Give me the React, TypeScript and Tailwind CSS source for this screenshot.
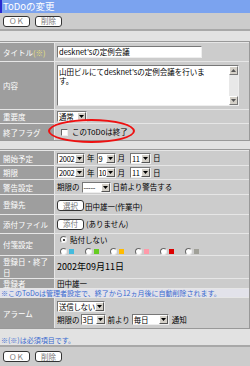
import React from "react";

const Sel = ({ w, v }: { w: number; v: string }) => (
  <div
    className="flex h-[11px] shrink-0 items-stretch border border-t-[#777] border-l-[#777] border-b-[#eee] border-r-[#eee] bg-white"
    style={{ width: w }}
  >
    <div className="flex-1 overflow-hidden whitespace-nowrap pl-[1px] text-[7.5px] leading-[9px] tracking-[-0.3px] text-black">{v}</div>
    <div className="flex w-[9px] items-center justify-center border border-t-[#fff] border-l-[#fff] border-b-[#555] border-r-[#555] bg-[#d4d0c8]">
      <svg width="5" height="3" viewBox="0 0 5 3">
        <path d="M0 0H5L2.5 3Z" fill="#000" />
      </svg>
    </div>
  </div>
);

const Btn = ({ t }: { t: string }) => (
  <div className="flex h-[11px] shrink-0 items-center justify-center rounded-[3px] border border-[#333] bg-white px-[5px] text-[7.5px] leading-none text-[#777]">
    {t}
  </div>
);

const Row = ({ label, h, children, labelExtra }: { label: React.ReactNode; h: number; children?: React.ReactNode; labelExtra?: React.ReactNode }) => (
  <div className="flex border-t border-[#e6e6e6]" style={{ height: h }}>
    <div className="flex w-[55px] shrink-0 items-center border-r border-[#e6e6e6] bg-[#9e9e9e] pl-[3px] text-[7.5px] leading-[9px] text-white">
      {label}
      {labelExtra}
    </div>
    <div className="flex min-w-0 flex-1 items-center bg-[#cccccc] pl-[2px] text-[7.5px] leading-[10px] text-black">{children}</div>
  </div>
);

const Radio = ({ on = false }: { on?: boolean }) => (
  <div className="relative h-[7px] w-[7px] shrink-0 rounded-full border border-t-[#666] border-l-[#666] border-b-[#eee] border-r-[#eee] bg-white">
    {on && <div className="absolute left-[1.5px] top-[1.5px] h-[2px] w-[2px] rounded-full bg-black" />}
  </div>
);

export default function App() {
  return (
    <div className="relative h-[366px] w-[250px] overflow-hidden bg-[#e2e2e2] font-['Noto_Sans_CJK_JP',sans-serif]">
      {/* title bar */}
      <div className="flex h-[13px] bg-[#7ba3ef]">
        <div className="w-[2px] bg-[#2a2ad0]" />
        <div className="pl-[1px] text-[9.5px] leading-[13px] text-white">ToDoの変更</div>
      </div>
      {/* button bar */}
      <div className="flex h-[18px] items-center gap-[5px] border-b-2 border-[#a8a8a8] bg-[#cccccc] pl-[3px]">
        <Btn t="ＯＫ" />
        <Btn t="削除" />
      </div>
      <div className="h-[10px]" />
      <div className="border-r border-b border-[#999] border-t border-t-[#999]">
        <Row h={19} label="タイトル" labelExtra={<span className="text-[#e8e07a]">(※)</span>}>
          <div className="flex h-[12px] w-[145px] items-center border border-t-[#777] border-l-[#777] border-b-[#eee] border-r-[#eee] bg-white pl-[1px] text-[7.5px]">
            desknet'sの定例会議
          </div>
        </Row>
        <Row h={48} label="内容">
          <div className="flex h-[41px] w-[182px] border border-t-[#777] border-l-[#777] border-b-[#eee] border-r-[#eee] bg-white">
            <div className="flex-1">
              <div className="w-[152px] pl-[1px] pt-[1px] text-[7.5px] leading-[9px]">山田ビルにてdesknet'sの定例会議を行います。</div>
            </div>
            <div className="flex w-[9px] flex-col justify-between bg-[#e8e8e8]">
              <div className="flex h-[9px] items-center justify-center border border-t-[#fff] border-l-[#fff] border-b-[#777] border-r-[#777] bg-[#d4d0c8]">
                <svg width="5" height="3" viewBox="0 0 5 3"><path d="M0 3H5L2.5 0Z" fill="#555" /></svg>
              </div>
              <div className="flex h-[9px] items-center justify-center border border-t-[#fff] border-l-[#fff] border-b-[#777] border-r-[#777] bg-[#d4d0c8]">
                <svg width="5" height="3" viewBox="0 0 5 3"><path d="M0 0H5L2.5 3Z" fill="#555" /></svg>
              </div>
            </div>
          </div>
        </Row>
        <Row h={14} label="重要度">
          <Sel w={30} v="通常" />
        </Row>
        <Row h={17} label="終了フラグ">
          <div className="flex items-center gap-[4px] pl-[4px]">
            <div className="h-[7px] w-[7px] border border-t-[#666] border-l-[#666] border-b-[#eee] border-r-[#eee] bg-white" />
            <span className="text-[7.5px]">このToDoは終了</span>
          </div>
        </Row>
      </div>
      <div className="h-[8px]" />
      <div className="border-r border-b border-[#999] border-t border-t-[#999]">
        <Row h={15} label="開始予定">
          <div className="flex items-center gap-[2px]">
            <Sel w={28} v="2002" /> <span>年</span> <Sel w={19} v="9" /> <span className="mr-[3px]">月</span>
            <Sel w={21} v="11" /> <span>日</span>
          </div>
        </Row>
        <Row h={14} label="期限">
          <div className="flex items-center gap-[2px]">
            <Sel w={28} v="2002" /> <span>年</span> <Sel w={19} v="10" /> <span className="mr-[3px]">月</span>
            <Sel w={21} v="11" /> <span>日</span>
          </div>
        </Row>
        <Row h={15} label="警告設定">
          <div className="flex items-center gap-[2px]">
            <span>期限の</span> <Sel w={29} v="-----" /> <span>日前より警告する</span>
          </div>
        </Row>
        <Row h={20} label="登録先">
          <div className="flex items-end gap-[1px] pt-[2px]">
            <Btn t="選択" />
            <span className="leading-[8px]">田中雄一(作業中)</span>
          </div>
        </Row>
        <Row h={19} label="添付ファイル">
          <div className="flex items-center gap-[2px]">
            <Btn t="添付" />
            <span>(ありません)</span>
          </div>
        </Row>
        <Row h={22} label="付箋設定">
          <div className="flex flex-col gap-[4px] pl-[3px] pt-[1px]">
            <div className="flex items-center gap-[3px]">
              <Radio on />
              <span className="leading-[8px]">貼付しない</span>
            </div>
            <div className="flex items-center">
              {["#44bbdd", "#66cc22", "#ffbb00", "#ff9aaa", "#dd0000", "#a0a098"].map((c) => (
                <div key={c} className="mr-[11px] flex items-center gap-[2px]">
                  <Radio />
                  <div className="h-[5px] w-[5px]" style={{ background: c }} />
                </div>
              ))}
            </div>
          </div>
        </Row>
        <Row h={23} label={<div className="flex flex-col leading-[11px]"><span>登録日・終了</span><span>日</span></div>}>
          <span className="text-[9px] leading-[10px]">2002年09月11日</span>
        </Row>
        <Row h={10} label="登録者">
          <span>田中雄一</span>
        </Row>
        <div className="flex h-[9px] items-center border-t border-[#e6e6e6] bg-[#e2e2ea] pl-[1px] text-[7px] leading-none text-[#3a6ad0]">
          ※このToDoは管理者設定で、終了から12ヵ月後に自動削除されます。
        </div>
        <Row h={31} label="アラーム">
          <div className="flex flex-col gap-[2px]">
            <Sel w={48} v="送信しない" />
            <div className="flex items-center gap-[1px]">
              <span>期限の</span> <Sel w={25} v="3日" /> <span className="mx-[1px]">前より</span> <Sel w={37} v="毎日" />
              <span className="ml-[2px]">通知</span>
            </div>
          </div>
        </Row>
      </div>
      <div className="h-[7px]" />
      <div className="pl-[1px] text-[7px] leading-[9px] text-[#3a6ad0]">※(※)は必須項目です。</div>
      <div className="flex h-[21px] items-center gap-[5px] border-t-2 border-[#a8a8a8] bg-[#cccccc] pl-[3px]">
        <Btn t="ＯＫ" />
        <Btn t="削除" />
      </div>
      {/* red annotation ellipse */}
      <div className="pointer-events-none absolute left-[48px] top-[119px] h-[24px] w-[87px] rounded-[50%] border-2 border-[#ee1111]" />
    </div>
  );
}
